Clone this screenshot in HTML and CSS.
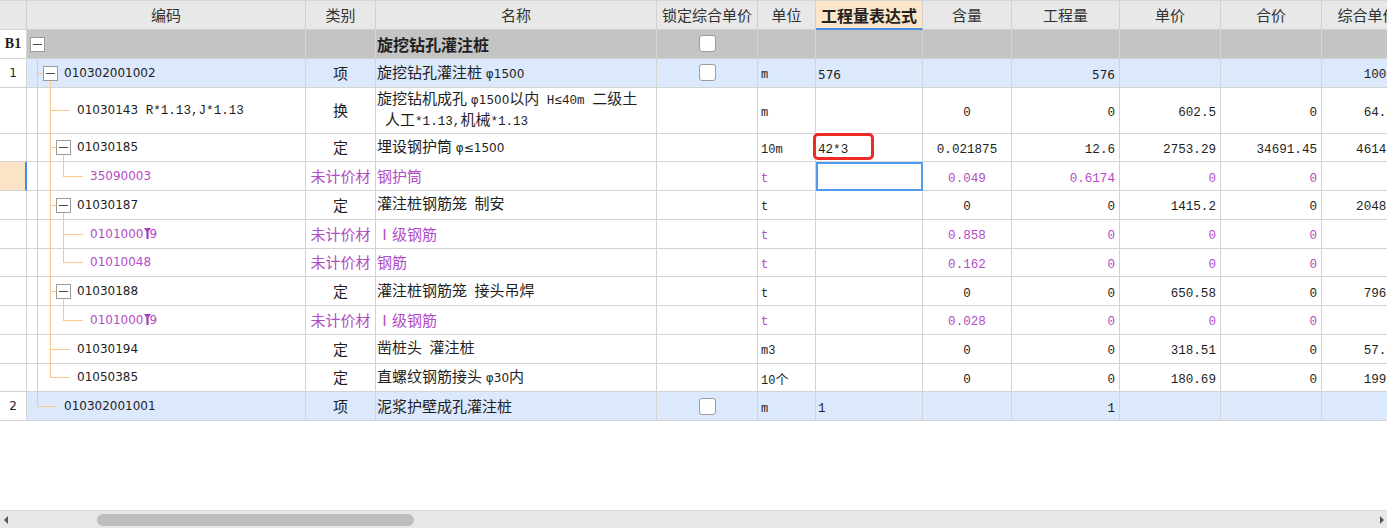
FILE: index.html
```html
<!DOCTYPE html>
<html lang="zh-CN">
<head>
<meta charset="utf-8">
<title>分部分项</title>
<link rel="stylesheet" href="styles.css">
</head>
<body>
<div class="page">
  <div class="sheet">
    <div class="row hd">
      <div class="c"></div>
      <div class="c">编码</div>
      <div class="c">类别</div>
      <div class="c">名称</div>
      <div class="c">锁定综合单价</div>
      <div class="c">单位</div>
      <div class="c hx">工程量表达式</div>
      <div class="c">含量</div>
      <div class="c">工程量</div>
      <div class="c">单价</div>
      <div class="c">合价</div>
      <div class="c">综合单价</div>
    </div>

    <div class="row b1">
      <div class="c cn bn">B1</div>
      <div class="c cc"><i class="g k dn"><b class="box"></b></i></div>
      <div class="c ck"></div>
      <div class="c cm"><span class="bold">旋挖钻孔灌注桩</span></div>
      <div class="c cl"><span class="chk"></span></div>
      <div class="c cu"></div>
      <div class="c ce"></div>
      <div class="c cq"></div>
      <div class="c cg"></div>
      <div class="c cp"></div>
      <div class="c ct"></div>
      <div class="c cz"></div>
    </div>

    <div class="row it">
      <div class="c cn"><span class="n">1</span></div>
      <div class="c cc"><i class="g t"></i><i class="g k dn"><b class="box"></b></i><span class="code">010302001002</span></div>
      <div class="c ck">项</div>
      <div class="c cm"><span>旋挖钻孔灌注桩<span class="n"> φ1500</span></span></div>
      <div class="c cl"><span class="chk"></span></div>
      <div class="c cu">m</div>
      <div class="c ce"><span class="n">576</span></div>
      <div class="c cq"></div>
      <div class="c cg"><span class="n">576</span></div>
      <div class="c cp"></div>
      <div class="c ct"></div>
      <div class="c cz">100.62</div>
    </div>

    <div class="row tall">
      <div class="c cn"></div>
      <div class="c cc"><i class="g v"></i><i class="g t"></i><i class="g h"></i><span class="code">01030143<span class="m"> R*1.13,J*1.13</span></span></div>
      <div class="c ck">换</div>
      <div class="c cm"><span class="two"><span class="ln">旋挖钻机成孔<span class="n"> φ1500</span>以内<span class="m"> H≤40m </span>二级土</span><span class="ln ind">人工<span class="m">*1.13,</span>机械<span class="m">*1.13</span></span></span></div>
      <div class="c cl"></div>
      <div class="c cu">m</div>
      <div class="c ce"></div>
      <div class="c cq">0</div>
      <div class="c cg">0</div>
      <div class="c cp">602.5</div>
      <div class="c ct">0</div>
      <div class="c cz">64.125</div>
    </div>

    <div class="row">
      <div class="c cn"></div>
      <div class="c cc"><i class="g v"></i><i class="g t"></i><i class="g k dn"><b class="box"></b></i><span class="code">01030185</span></div>
      <div class="c ck">定</div>
      <div class="c cm"><span>埋设钢护筒<span class="n"> φ≤1500</span></span></div>
      <div class="c cl"></div>
      <div class="c cu">10m</div>
      <div class="c ce hl"><span class="ring"></span><span class="m">42*3</span></div>
      <div class="c cq">0.021875</div>
      <div class="c cg">12.6</div>
      <div class="c cp">2753.29</div>
      <div class="c ct">34691.45</div>
      <div class="c cz">4614.79</div>
    </div>

    <div class="row mat">
      <div class="c cn cur"></div>
      <div class="c cc"><i class="g v"></i><i class="g v"></i><i class="g l"></i><i class="g h"></i><span class="code">35090003</span></div>
      <div class="c ck">未计价材</div>
      <div class="c cm"><span>钢护筒</span></div>
      <div class="c cl"></div>
      <div class="c cu">t</div>
      <div class="c ce sel"></div>
      <div class="c cq">0.049</div>
      <div class="c cg">0.6174</div>
      <div class="c cp">0</div>
      <div class="c ct">0</div>
      <div class="c cz"></div>
    </div>

    <div class="row">
      <div class="c cn"></div>
      <div class="c cc"><i class="g v"></i><i class="g t"></i><i class="g k dn"><b class="box"></b></i><span class="code">01030187</span></div>
      <div class="c ck">定</div>
      <div class="c cm"><span>灌注桩钢筋笼<span class="m"> </span>制安</span></div>
      <div class="c cl"></div>
      <div class="c cu">t</div>
      <div class="c ce"></div>
      <div class="c cq">0</div>
      <div class="c cg">0</div>
      <div class="c cp">1415.2</div>
      <div class="c ct">0</div>
      <div class="c cz">2048.32</div>
    </div>

    <div class="row mat">
      <div class="c cn"></div>
      <div class="c cc"><i class="g v"></i><i class="g v"></i><i class="g t"></i><i class="g h"></i><span class="code">0101000<svg class="flag" viewBox="0 0 7 11" width="7" height="11"><path d="M0 0H7L4.6 3.6V11H2.4V3.6Z"/></svg>9</span></div>
      <div class="c ck">未计价材</div>
      <div class="c cm"><span>Ⅰ级钢筋</span></div>
      <div class="c cl"></div>
      <div class="c cu">t</div>
      <div class="c ce"></div>
      <div class="c cq">0.858</div>
      <div class="c cg">0</div>
      <div class="c cp">0</div>
      <div class="c ct">0</div>
      <div class="c cz"></div>
    </div>

    <div class="row mat">
      <div class="c cn"></div>
      <div class="c cc"><i class="g v"></i><i class="g v"></i><i class="g l"></i><i class="g h"></i><span class="code">01010048</span></div>
      <div class="c ck">未计价材</div>
      <div class="c cm"><span>钢筋</span></div>
      <div class="c cl"></div>
      <div class="c cu">t</div>
      <div class="c ce"></div>
      <div class="c cq">0.162</div>
      <div class="c cg">0</div>
      <div class="c cp">0</div>
      <div class="c ct">0</div>
      <div class="c cz"></div>
    </div>

    <div class="row">
      <div class="c cn"></div>
      <div class="c cc"><i class="g v"></i><i class="g t"></i><i class="g k dn"><b class="box"></b></i><span class="code">01030188</span></div>
      <div class="c ck">定</div>
      <div class="c cm"><span>灌注桩钢筋笼<span class="m"> </span>接头吊焊</span></div>
      <div class="c cl"></div>
      <div class="c cu">t</div>
      <div class="c ce"></div>
      <div class="c cq">0</div>
      <div class="c cg">0</div>
      <div class="c cp">650.58</div>
      <div class="c ct">0</div>
      <div class="c cz">796.45</div>
    </div>

    <div class="row mat">
      <div class="c cn"></div>
      <div class="c cc"><i class="g v"></i><i class="g v"></i><i class="g l"></i><i class="g h"></i><span class="code">0101000<svg class="flag" viewBox="0 0 7 11" width="7" height="11"><path d="M0 0H7L4.6 3.6V11H2.4V3.6Z"/></svg>9</span></div>
      <div class="c ck">未计价材</div>
      <div class="c cm"><span>Ⅰ级钢筋</span></div>
      <div class="c cl"></div>
      <div class="c cu">t</div>
      <div class="c ce"></div>
      <div class="c cq">0.028</div>
      <div class="c cg">0</div>
      <div class="c cp">0</div>
      <div class="c ct">0</div>
      <div class="c cz"></div>
    </div>

    <div class="row">
      <div class="c cn"></div>
      <div class="c cc"><i class="g v"></i><i class="g t"></i><i class="g h"></i><span class="code">01030194</span></div>
      <div class="c ck">定</div>
      <div class="c cm"><span>凿桩头<span class="m"> </span>灌注桩</span></div>
      <div class="c cl"></div>
      <div class="c cu">m3</div>
      <div class="c ce"></div>
      <div class="c cq">0</div>
      <div class="c cg">0</div>
      <div class="c cp">318.51</div>
      <div class="c ct">0</div>
      <div class="c cz">57.312</div>
    </div>

    <div class="row">
      <div class="c cn"></div>
      <div class="c cc"><i class="g v"></i><i class="g l"></i><i class="g h"></i><span class="code">01050385</span></div>
      <div class="c ck">定</div>
      <div class="c cm"><span>直螺纹钢筋接头<span class="n"> φ30</span>内</span></div>
      <div class="c cl"></div>
      <div class="c cu"><span>10<span class="zh">个</span></span></div>
      <div class="c ce"></div>
      <div class="c cq">0</div>
      <div class="c cg">0</div>
      <div class="c cp">180.69</div>
      <div class="c ct">0</div>
      <div class="c cz">199.35</div>
    </div>

    <div class="row it">
      <div class="c cn"><span class="n">2</span></div>
      <div class="c cc"><i class="g l"></i><i class="g h"></i><span class="code">010302001001</span></div>
      <div class="c ck">项</div>
      <div class="c cm"><span>泥浆护壁成孔灌注桩</span></div>
      <div class="c cl"><span class="chk"></span></div>
      <div class="c cu">m</div>
      <div class="c ce"><span class="m">1</span></div>
      <div class="c cq"></div>
      <div class="c cg">1</div>
      <div class="c cp"></div>
      <div class="c ct"></div>
      <div class="c cz"></div>
    </div>
  </div>

  <div class="hscroll">
    <span class="arr left"></span>
    <span class="thumb"></span>
    <span class="fill"></span>
    <span class="arr right"></span>
  </div>
</div>
</body>
</html>
```

FILE: styles.css
```css
* { box-sizing: border-box; }

html, body {
  margin: 0;
  padding: 0;
  background: #fff;
}

body {
  width: 1387px;
  height: 528px;
  overflow: hidden;
  font-family: "Noto Sans CJK SC", sans-serif;
  font-size: 15px;
  color: #1e1e1e;
  --tl: #f8c88c;
  --grid: #d3d3d3;
}

.page {
  display: flex;
  flex-direction: column;
  height: 528px;
}

.sheet {
  flex: 1;
  overflow: hidden;
}

/* rows */
.row {
  display: grid;
  grid-template-columns: 27px 279px 70px 281px 101px 58px 107px 89px 108px 101px 101px 92px;
  height: 28.75px;
}

.row.tall { height: 46px; }

.c {
  display: flex;
  align-items: center;
  min-width: 0;
  padding: 0 2px;
  white-space: nowrap;
  line-height: 18px;
  border-right: 1px solid var(--grid);
  border-bottom: 1px solid var(--grid);
  background: #fff;
}

/* header */
.row.hd {
  height: 30px;
  border-top: 1px solid #d6d6d6;
}
.row.hd .c {
  justify-content: center;
  background: #e8e8e8;
  color: #333;
  border-color: #d0d0d0;
}
.row.hd .c.hx {
  background: #fde5c7;
  font-weight: bold;
  font-size: 16px;
  color: #222;
  border-bottom: 2px solid #4a90e2;
}

/* row variants */
.row.b1 .c { background: #c4c4c4; border-right-color: #d6d6d6; }
.row.it .c { background: #dce8fb; }
.row .c.cn { background: #fff; }
.row.mat .c { color: #b24cc6; }

/* columns */
.cn { justify-content: center; }
.cn.bn {
  font-family: "Liberation Serif", serif;
  font-weight: bold;
  font-size: 14px;
}
.cn.cur {
  background: #fde4c6 !important;
  border-right: 2px solid #3e8ef0;
}

.cc {
  align-items: stretch;
  padding-left: 4px;
}

.ck { justify-content: center; }
.cm { padding-left: 1px; }
.cl { justify-content: center; }
.cu {
  padding-left: 3px;
  font-family: "Liberation Mono", monospace;
  font-size: 12px;
}
.ce {
  padding-left: 2px;
  font-family: "Liberation Mono", monospace;
  font-size: 12.6px;
}
.cq, .cg, .cp, .ct, .cz {
  font-family: "Liberation Mono", monospace;
  font-size: 12.6px;
}
.cu, .ce, .cq, .cg, .cp, .ct, .cz {
  padding-top: 5px;
}
.cq { justify-content: center; }
.cg, .cp, .ct, .cz {
  justify-content: flex-end;
  padding-right: 4px;
}

/* text helpers */
.n {
  font-family: "DejaVu Sans", sans-serif;
  font-size: 12px;
}
.m {
  font-family: "Liberation Mono", monospace;
  font-size: 12.6px;
}
.zh {
  font-family: "Noto Sans CJK SC", sans-serif;
  font-size: 13px;
}
.bold {
  font-weight: bold;
  font-size: 16px;
}

.two { display: flex; flex-direction: column; }
.ln { display: block; }
.ln.ind { padding-left: 8px; }

.code {
  align-self: center;
  margin-left: 7px;
  font-family: "DejaVu Sans", sans-serif;
  font-size: 12px;
}

.flag {
  fill: #a33fbf;
  vertical-align: -1px;
  margin: 0 -2px 0 1px;
}

/* tree guides */
.g {
  flex: none;
  width: 13px;
  margin-bottom: -1px;
  display: flex;
  align-items: center;
  justify-content: center;
}
.g.v {
  background: linear-gradient(var(--tl), var(--tl)) 6px 0 / 1px 100% no-repeat;
}
.g.t {
  background:
    linear-gradient(var(--tl), var(--tl)) 6px 0 / 1px 100% no-repeat,
    linear-gradient(var(--tl), var(--tl)) 6px 50% / 7px 1px no-repeat;
}
.g.l {
  background:
    linear-gradient(var(--tl), var(--tl)) 6px 0 / 1px 50% no-repeat,
    linear-gradient(var(--tl), var(--tl)) 6px 50% / 7px 1px no-repeat;
}
.g.h {
  background: linear-gradient(var(--tl), var(--tl)) 0 50% / 100% 1px no-repeat;
}
.g.k.dn {
  background: linear-gradient(var(--tl), var(--tl)) 6px 100% / 1px 50% no-repeat;
}

.box {
  flex: none;
  width: 15px;
  height: 15px;
  border: 1px solid #9a9a9a;
  background: linear-gradient(#4a4a4a, #4a4a4a) center / 9px 1px no-repeat, #fff;
}

/* checkbox */
.chk {
  width: 17px;
  height: 17px;
  border: 1px solid #9c9c9c;
  border-radius: 3px;
  background: #fff;
}

/* highlights */
.ce.hl { position: relative; }
.ring {
  position: absolute;
  left: -3px;
  top: -1px;
  width: 61px;
  height: 27px;
  border: 3px solid #ee2a24;
  border-radius: 5px;
}
.ce.sel {
  outline: 2px solid #4d9cf0;
  outline-offset: -2px;
}

/* horizontal scrollbar */
.hscroll {
  flex: none;
  height: 18px;
  display: flex;
  align-items: center;
  padding: 0 3px;
  background: #e8e8e8;
  border-top: 1px solid #dadada;
}
.arr {
  flex: none;
  width: 0;
  height: 0;
  border-top: 4px solid transparent;
  border-bottom: 4px solid transparent;
}
.arr.left { border-right: 4px solid #555; margin-left: 1px; }
.arr.right { border-left: 4px solid #555; }
.thumb {
  flex: none;
  width: 317px;
  height: 12px;
  margin-left: 89px;
  border-radius: 6px;
  background: #bdbdbd;
}
.fill { flex: 1; }
```
